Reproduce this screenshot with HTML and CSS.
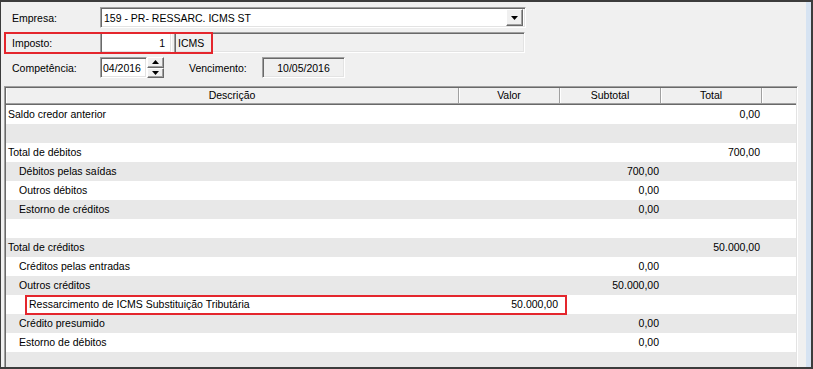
FILE: index.html
```html
<!DOCTYPE html>
<html lang="pt-br">

<head>
    <meta charset="UTF-8">
    <title>Apuração ICMS ST</title>
    <link rel="stylesheet" href="styles.css">
</head>

<body>

    <div class="janela">
        <div class="conteudo">

            <div class="formulario">
                <div class="linha">
                    <span class="rotulo">Empresa:</span>
                    <div class="campo combo">
                        <span class="texto">159 - PR- RESSARC. ICMS ST</span>
                        <span class="botao combo-btn">
                            <svg width="7" height="4" viewBox="0 0 7 4"><path d="M0 0h7L3.5 4z" fill="#000"/></svg>
                        </span>
                    </div>
                </div>
                <div class="linha">
                    <span class="rotulo">Imposto:</span>
                    <div class="campo imposto">1</div>
                    <div class="campo desabilitado nome-imposto">ICMS</div>
                </div>
                <div class="linha">
                    <span class="rotulo">Competência:</span>
                    <div class="campo competencia">04/2016</div>
                    <div class="spinner">
                        <span class="botao">
                            <svg width="7" height="4" viewBox="0 0 7 4"><path d="M3.5 0L7 4H0z" fill="#000"/></svg>
                        </span>
                        <span class="botao">
                            <svg width="7" height="4" viewBox="0 0 7 4"><path d="M0 0h7L3.5 4z" fill="#000"/></svg>
                        </span>
                    </div>
                    <span class="rotulo-venc">Vencimento:</span>
                    <div class="campo desabilitado vencimento">10/05/2016</div>
                </div>
            </div>

            <div class="grade">
                <div class="cabecalho">
                    <div class="col">Descrição</div>
                    <div class="col">Valor</div>
                    <div class="col">Subtotal</div>
                    <div class="col">Total</div>
                    <div class="col"></div>
                </div>

                <div class="item"><span>Saldo credor anterior</span><span></span><span></span><span class="num">0,00</span><span></span></div>
                <div class="item"><span></span><span></span><span></span><span></span><span></span></div>
                <div class="item"><span>Total de débitos</span><span></span><span></span><span class="num">700,00</span><span></span></div>
                <div class="item"><span class="n1">Débitos pelas saídas</span><span></span><span class="num">700,00</span><span></span><span></span></div>
                <div class="item"><span class="n1">Outros débitos</span><span></span><span class="num">0,00</span><span></span><span></span></div>
                <div class="item"><span class="n1">Estorno de créditos</span><span></span><span class="num">0,00</span><span></span><span></span></div>
                <div class="item"><span></span><span></span><span></span><span></span><span></span></div>
                <div class="item"><span>Total de créditos</span><span></span><span></span><span class="num">50.000,00</span><span></span></div>
                <div class="item"><span class="n1">Créditos pelas entradas</span><span></span><span class="num">0,00</span><span></span><span></span></div>
                <div class="item"><span class="n1">Outros créditos</span><span></span><span class="num">50.000,00</span><span></span><span></span></div>
                <div class="item"><span class="n2">Ressarcimento de ICMS Substituição Tributária</span><span class="num">50.000,00</span><span></span><span></span><span></span></div>
                <div class="item"><span class="n1">Crédito presumido</span><span></span><span class="num">0,00</span><span></span><span></span></div>
                <div class="item"><span class="n1">Estorno de débitos</span><span></span><span class="num">0,00</span><span></span><span></span></div>
                <div class="item"><span></span><span></span><span></span><span></span><span></span></div>
            </div>

        </div>
        <div class="faixa"></div>

        <!-- destaques em vermelho -->
        <div class="destaque destaque-imposto"></div>
        <div class="destaque destaque-ressarc"></div>
    </div>

</body>

</html>
```

FILE: styles.css
```css
* {
    box-sizing: border-box;
}

body {
    margin: 0;
    font-family: "Liberation Sans", Arial, sans-serif;
    font-size: 10.5px;
    color: #000;
}

.janela {
    position: relative;
    display: flex;
    width: 813px;
    height: 369px;
    overflow: hidden;
    background-color: #f0f0f0;
    border-top: 2px solid #3c3c3c;
    border-left: 1px solid #3c3c3c;
    border-bottom: 2px solid #3c3c3c;
}

.conteudo {
    flex: 1;
    min-width: 0;
}

.faixa {
    width: 7px;
    background-color: #d6e3f2;
    border-right: 2px solid #3c3c3c;
}

.formulario {
    display: flex;
    flex-direction: column;
    gap: 4px;
    padding: 5px 0 0 11px;
}

.linha {
    display: flex;
    align-items: center;
    height: 21px;
}

.rotulo {
    width: 88px;
}

.rotulo-venc {
    margin-left: 25px;
    width: 73px;
}

.campo {
    display: flex;
    align-items: center;
    height: 21px;
    padding: 0 3px;
    background-color: #fff;
    border: 1px solid;
    border-color: #a0a0a0 #fff #fff #a0a0a0;
    box-shadow: inset 1px 1px 0 #696969, inset -1px -1px 0 #e3e3e3;
}

.desabilitado {
    background-color: #f0f0f0;
}

.combo {
    width: 426px;
    justify-content: space-between;
    padding-right: 2px;
}

.imposto {
    width: 72px;
    justify-content: flex-end;
    padding-right: 6px;
}

.nome-imposto {
    width: 351px;
    margin-left: 2px;
}

.competencia {
    width: 47px;
    padding-left: 2px;
}

.vencimento {
    width: 83px;
    justify-content: center;
}

.botao {
    display: flex;
    align-items: center;
    justify-content: center;
    background-color: #f0f0f0;
    border: 1px solid;
    border-color: #fff #696969 #696969 #fff;
    box-shadow: inset -1px -1px 0 #a0a0a0;
}

.combo-btn {
    width: 17px;
    height: 17px;
}

.spinner {
    display: flex;
    flex-direction: column;
    width: 17px;
    height: 21px;
}

.spinner .botao {
    flex: 1;
}

.grade {
    width: 794px;
    height: 300px;
    margin: 8px 0 0 3px;
    padding: 1px;
    border: 1px solid;
    border-color: #a0a0a0 #fff #fff #a0a0a0;
    box-shadow: inset 1px 1px 0 #696969, inset -1px -1px 0 #e3e3e3;
    background-color: #f0f0f0;
}

.cabecalho,
.item {
    display: grid;
    grid-template-columns: 453px 101px 101px 101px 1fr;
}

.cabecalho {
    height: 17px;
    border-bottom: 1px solid #696969;
}

.col {
    text-align: center;
    line-height: 15px;
    border-right: 1px solid #a0a0a0;
    border-bottom: 1px solid #a0a0a0;
    box-shadow: inset 1px 0 0 #fff;
}

.col:last-child {
    border-right: 0;
}

.item {
    height: 19px;
    line-height: 19px;
    background-color: #fff;
}

.item:nth-child(odd) {
    background-color: #e8e8e8;
}

.item span {
    padding-left: 2px;
    white-space: nowrap;
}

.item .n1 {
    padding-left: 13px;
}

.item .n2 {
    padding-left: 23px;
}

.item .num {
    text-align: right;
    padding-right: 2px;
}

.destaque {
    position: absolute;
    border: 2px solid #e4262d;
}

.destaque-imposto {
    left: 3px;
    top: 30px;
    width: 209px;
    height: 22px;
}

.destaque-ressarc {
    left: 24px;
    top: 293px;
    width: 542px;
    height: 20px;
}
```
